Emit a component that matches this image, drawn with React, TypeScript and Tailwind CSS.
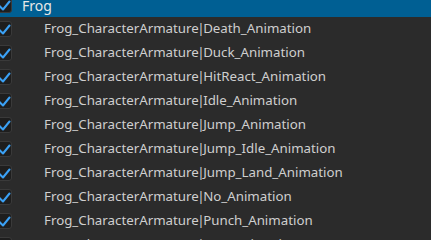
const ANIMS = [
  "Death_Animation",
  "Duck_Animation",
  "HitReact_Animation",
  "Idle_Animation",
  "Jump_Animation",
  "Jump_Idle_Animation",
  "Jump_Land_Animation",
  "No_Animation",
  "Punch_Animation",
  "Run_Animation",
];

function Check() {
  return (
    <span className="ml-[-4px] flex h-[16px] w-[16px] shrink-0 items-center justify-center rounded-[3px] border border-[#3a3a3a] bg-[#1e1e1e]">
      <svg width="13" height="13" viewBox="0 0 13 13" fill="none">
        <path d="M1.5 7 L5 10.5 L11.5 2.5" stroke="#3ba1f5" strokeWidth="2" strokeLinecap="round" strokeLinejoin="round" />
      </svg>
    </span>
  );
}

export default function App() {
  return (
    <div
      className="h-[240px] w-[431px] overflow-hidden bg-[#2b2b2b] text-[13.3px] text-[#cfcfcf]"
      style={{ fontFamily: "'Noto Sans', 'Open Sans', sans-serif" }}
    >
      <div className="-mt-[7px]">
        <div className="flex h-[24px] items-center bg-[#005f93] text-[#e8e8e8]">
          <Check />
          <span className="ml-[10px] text-[14px]">Frog</span>
        </div>
        {ANIMS.map((a) => (
          <div key={a} className="flex h-[24px] items-center">
            <Check />
            <span className="ml-[32px] whitespace-nowrap">
              Frog_CharacterArmature<span className="mx-[-1.5px]">|</span>{a}
            </span>
          </div>
        ))}
      </div>
    </div>
  );
}
